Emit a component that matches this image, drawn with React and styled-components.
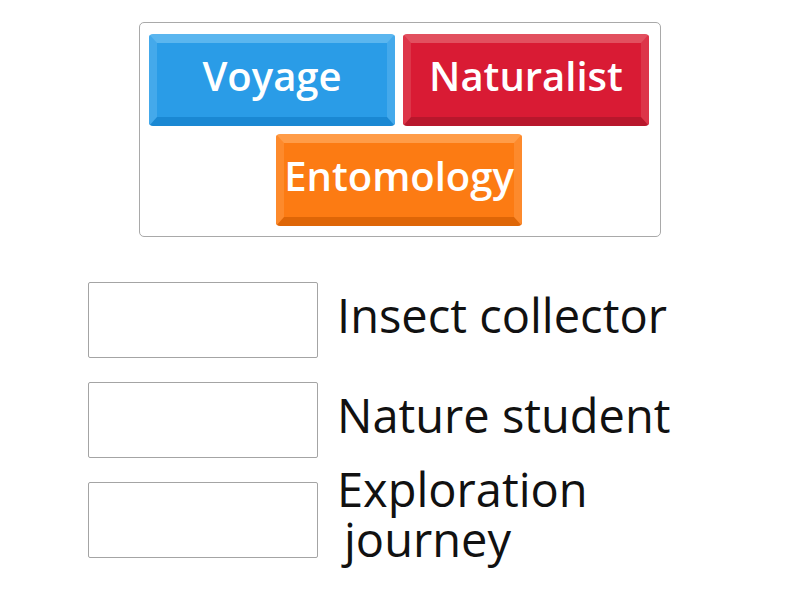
import React from "react";
import styled, { createGlobalStyle } from "styled-components";

const Global = createGlobalStyle`
  html, body { margin: 0; padding: 0; background: #fff; }
  body { font-family: "Open Sans", "Noto Sans", sans-serif; }
`;

const Page = styled.div`
  width: 800px;
  height: 600px;
  box-sizing: border-box;
  padding-top: 22px;
  display: flex;
  flex-direction: column;
`;

const Panel = styled.div`
  box-sizing: border-box;
  margin-left: 139px;
  width: 522px;
  height: 215px;
  border: 1px solid #a9a9a9;
  border-radius: 5px;
  padding: 11px 11px 0 9px;
  display: flex;
  flex-wrap: wrap;
  justify-content: center;
  align-content: flex-start;
  gap: 8px;
`;

const palettes = {
  blue: { base: "#2a9ce7", top: "#5bb6ef", side: "#44a9eb", bottom: "#1a88d3" },
  red: { base: "#d91b34", top: "#e2505f", side: "#dd3549", bottom: "#b8172c" },
  orange: { base: "#fc7b13", top: "#ff9c48", side: "#fd8a2c", bottom: "#de6607" },
};

const Tile = styled.div`
  box-sizing: border-box;
  width: 246px;
  height: 92px;
  border-radius: 4px;
  border-style: solid;
  border-width: 9px 8px 9px 8px;
  border-top-color: ${(p) => palettes[p.$c].top};
  border-left-color: ${(p) => palettes[p.$c].side};
  border-right-color: ${(p) => palettes[p.$c].side};
  border-bottom-color: ${(p) => palettes[p.$c].bottom};
  background: ${(p) => palettes[p.$c].base};
  display: flex;
  align-items: center;
  justify-content: center;
  color: #fff;
  font-family: "Open Sans", "Noto Sans", sans-serif;
  font-weight: 600;
  font-size: 40px;
  line-height: 1;
  padding-bottom: 8px;
  white-space: nowrap;
`;

const Rows = styled.div`
  margin-top: 45px;
  margin-left: 88px;
  display: flex;
  flex-direction: column;
  gap: 24px;
`;

const Row = styled.div`
  display: flex;
  align-items: center;
  gap: 19px;
  height: 76px;
`;

const Slot = styled.div`
  box-sizing: border-box;
  width: 230px;
  height: 76px;
  flex: none;
  border: 1px solid #a4a4a4;
  border-radius: 2px;
  background: #fff;
`;

const Label = styled.div`
  font-family: "Open Sans", "Noto Sans", sans-serif;
  font-size: 47px;
  line-height: 50px;
  color: #111;
  width: 360px;
  margin-bottom: ${(p) => p.$mb || 0}px;
`;

const Indent = styled.span`
  padding-left: 7px;
`;

export default function App() {
  return (
    <>
      <Global />
      <Page>
        <Panel>
          <Tile $c="blue">Voyage</Tile>
          <Tile $c="red">Naturalist</Tile>
          <Tile $c="orange">Entomology</Tile>
        </Panel>
        <Rows>
          <Row>
            <Slot />
            <Label $mb={11}>Insect collector</Label>
          </Row>
          <Row>
            <Slot />
            <Label $mb={11}>Nature student</Label>
          </Row>
          <Row>
            <Slot />
            <Label $mb={13}>
              Exploration
              <br />
              <Indent>journey</Indent>
            </Label>
          </Row>
        </Rows>
      </Page>
    </>
  );
}
